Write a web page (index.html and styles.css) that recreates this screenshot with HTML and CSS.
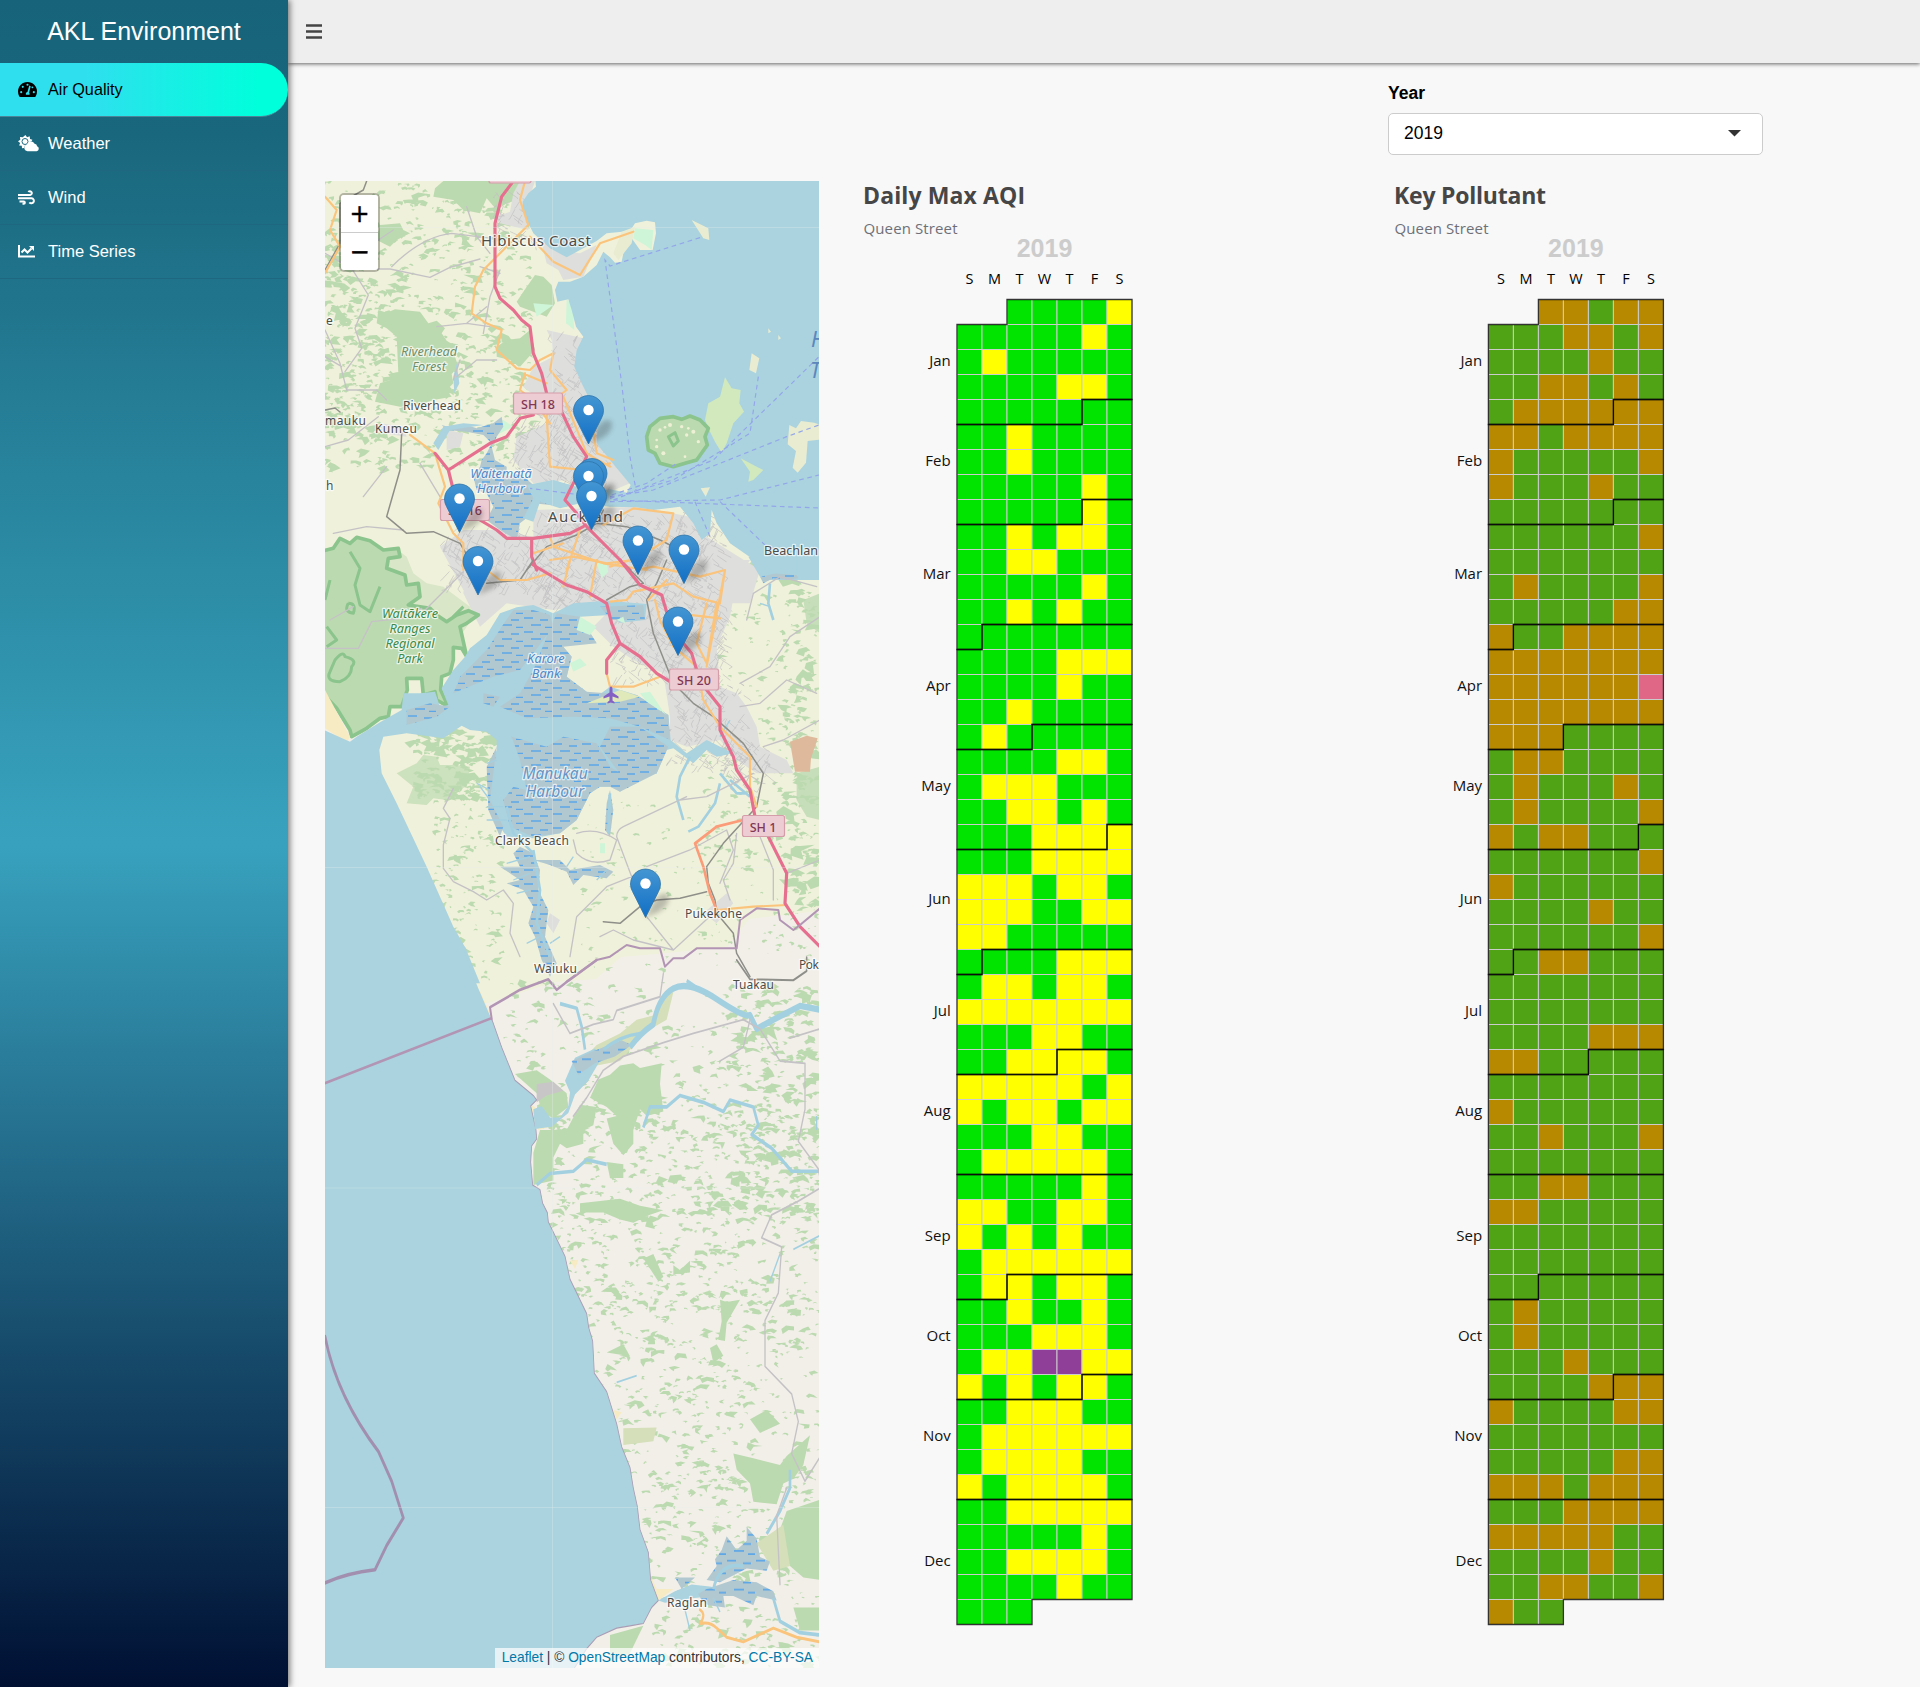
FILE: index.html
```html
<!DOCTYPE html>
<html lang="en">
<head>
<meta charset="utf-8">
<title>AKL Environment</title>
<link rel="stylesheet" href="styles.css">
</head>
<body>
<div class="app">
  <aside class="sidebar">
    <div class="brand">AKL Environment</div>
    <nav class="menu">
      <a class="item active"><svg class="ico" width="19" height="17" viewBox="0 0 576 512"><path fill="currentColor" d="M288 32C129 32 0 161 0 320c0 53 14 102 39 145 6 9 16 15 27 15h444c11 0 21-6 27-15 25-43 39-92 39-145C576 161 447 32 288 32z"/><g class="gauge"><circle cx="288" cy="112" r="32"/><circle cx="144" cy="176" r="32"/><circle cx="96" cy="336" r="32"/><circle cx="480" cy="336" r="32"/><circle cx="436" cy="190" r="28"/><path d="M340 138l46 16-50 190c18 20 22 46 10 72H242c-14-40 6-78 44-84z"/></g></svg><span>Air Quality</span></a>
      <a class="item"><svg class="ico" width="21" height="17" viewBox="0 0 21 17"><path fill="currentColor" d="M7.400 0l1.700 2.200 2.600-1 .3 2.800 2.400.8-1 1.800A4.600 4.600 0 0 0 9 9.300A4.300 4.300 0 0 0 6 13l-2 .3-.2-2.500-2.700-.4 1-2.500L0 6.200l2.300-1.500-.3-2.700 2.800.3z"/><circle class="sunring" cx="7" cy="6.500" r="3"/><path fill="currentColor" d="M9.500 16.200a3.400 3.400 0 0 1-.6-6.700 4.200 4.200 0 0 1 7.700-.7 2.600 2.600 0 0 1 2.500 2.400 2.600 2.600 0 0 1-.5 5z"/></svg><span>Weather</span></a>
      <a class="item"><svg class="ico" width="17" height="15" viewBox="0 0 17 15"><g fill="none" stroke="currentColor" stroke-width="2"><path d="M0 5h12.200a1.900 1.900 0 1 0-1.800-3"/><path d="M0 8.300h13.600a2.500 2.500 0 1 1-2.200 4"/><path d="M1.500 11.500h4.200a1.100 1.100 0 0 1 0 2.300H4.500"/></g></svg><span>Wind</span></a>
      <a class="item"><svg class="ico" width="17" height="13" viewBox="0 0 17 13"><path fill="none" stroke="currentColor" stroke-width="2" d="M1 0v11.500h16"/><path fill="none" stroke="currentColor" stroke-width="2" d="M3.500 7.500l3-3 3 3 4-4"/><path fill="currentColor" d="M11 1h5v5z"/></svg><span>Time Series</span></a>
    </nav>
  </aside>
  <div class="page">
    <header class="topbar"><svg width="16" height="15" viewBox="0 0 16 15"><path d="M0 1.500h16M0 7.500h16M0 13.500h16" stroke="#444" stroke-width="2.400"/></svg></header>
    <main class="content">
      <div class="filter">
        <label class="label">Year</label>
        <div class="select"><span>2019</span><svg width="13" height="7" viewBox="0 0 13 7"><path fill="#333" d="M0 0h13L6.500 6.500z"/></svg></div>
      </div>
      <div class="panels">
        <section class="map">
<svg class="canvas" width="494" height="1487" viewBox="0 0 494 1487">
<defs>
<linearGradient id="pin" x2="0" y2="1"><stop offset="0" stop-color="#4496d2"/><stop offset="1" stop-color="#126fc6"/></linearGradient>
<filter id="soft" x="-50%" y="-50%" width="200%" height="200%"><feGaussianBlur stdDeviation="2.400"/></filter>
<pattern id="tide3" width="87" height="42" patternUnits="userSpaceOnUse"><rect width="87" height="42" fill="#b2c8d0"/><path d="M3 6h27M51 12h24M24 27h30M66 34h21" stroke="#5ba6e8" stroke-width="3.800"/></pattern>
<g id="marker"><path class="shade" d="M0 0L8-16Q18-28 23-22Q25-12 12-5z"/><path class="pin" d="M0 0L-13-26A15 15 0 1 1 13-26z"/><circle cy="-34" r="5.200" fill="#fff"/></g>
</defs>
<rect width="494" height="1487" fill="#aad3df"/>
<g id="ground">
<path fill="#f2efe9" d="M0 0h494v1487H0z"/>
<path fill="#f0f1da" d="M0 0h494v730l-70 8-22 28-60 6-46 4-25 22-41 3-67 21-60 0-103-400H0z"/>
</g>
<g id="texture"></g>
<!-- northern suburbs and forests -->
<g transform="translate(-5 -11) scale(.33333)">
<path class="wood" d="M175 420L200 428 225 418 300 425 325 460 350 452 375 475 365 490 380 512 410 530 405 560 415 590 395 612 400 640 380 660 395 680 340 690 300 705 240 710 165 695 180 640 210 630 235 610 230 500 200 475 170 460z"/>
<path class="wood" d="M645 315L670 320 695 345 705 400 680 440 600 410 590 395 610 365zM560 510L600 505 630 480 645 540 600 590 570 570 530 560 530 530zM480 33L600 33 590 90 560 100 530 120 500 85 480 130 430 120 400 90 340 80 345 55 370 33zM180 165L240 160 250 180 270 190 230 210 210 230 170 210z"/>
<path class="mint" d="M640 400l60 5-50 35zM740 385l18 25 5 70-25-20zM500 770l50-20 30 20-60 30z"/>
<path class="urban" d="M600 33L645 33 620 110 625 180 540 160 530 140 570 125 580 70zM660 200L700 240 780 250 830 225 790 320 730 330 715 300 680 280zM680 480L790 505 770 600 830 710 840 800 930 940 870 965 790 960 740 930 640 940 580 870 590 800 680 760 660 690 610 650 640 590 700 560 695 510zM380 780L430 790 420 830 380 840zM180 760L250 770 260 800 190 790zM360 1130L430 1080 520 1080 640 1100 640 1020 960 1010 1110 1040 1160 1100 1320 1200 1290 1300 900 1300 430 1260z"/>
</g>
<!-- southern suburbs and ranges -->
<g transform="translate(-5 379) scale(.33333)">
<path class="urban" d="M440 0L1290 0 1250 60 1230 170 1190 260 1200 380 1250 400 1280 440 1310 500 1320 560 1400 600 1420 640 1310 640 1250 600 1200 540 1100 560 1050 540 1050 470 1030 340 940 300 880 260 820 200 900 120 700 150 560 130 480 200 430 100zM690 1060L720 1080 700 1120 680 1090zM1150 1060L1220 1000 1240 1030 1190 1090z"/>
<path class="wood" d="M190-10l30-30 40 30 20 50 40 30 50 10 80 60 10 30-40 60-60 20-60-60z" opacity=".45"/>
<path class="range" d="M-20-20L40-35 60-65 90-50 110-68 150-58 190-30 235-35 240-10 205-5 200 25 255 45 260 75 295 70 300 110 265 135 330 145 350 165 380 185 410 165 445 152 475 165 440 190 420 200 440 290 425 265 400 262 400 300 390 340 365 350 362 390 385 440 350 420 345 395 310 405 305 355 260 355 262 390 245 440 210 440 205 470 180 475 140 505 95 530 90 510 50 445 -20 370z"/>
<path class="range" d="M180 80l-30 75-30-20-15-60 15-50-30-50M85 130q25 0 15 30-30-5-15-30M20 200l30 40-30 20M45 300q25-30 30-10 40 10 20 30 0 30-35 45-45 0-30-30zM400 170l30-30M30 60l-15 60" fill="none"/>
<path class="sand" d="M15 390L90 530 80 548 15 505z"/>
<path class="wood" d="M290 610l20-25 40 5 10 25 45 0 45 5-10 60-30 10-30 30-40-5-20 20-60-5 20-50-50-40z" opacity=".7"/>
<path class="wood" d="M1450 120l50-20v120l-40-30zM1430 640l70-20v160l-40-10-30-50z" opacity=".8"/>
<path fill="#deb99b" d="M1410 545l50-18 33 8-20 60-3 40-45 0z"/>
</g>
<!-- Waikato hills -->
<g transform="translate(-5 779) scale(.33333 .45918)">
<path class="wood" d="M585 248L650 240 690 260 740 290 745 320 700 345 665 330 650 290zM810 300L835 260 870 250 900 230 940 225 960 235 1025 225 1020 270 1030 330 980 340 960 325 940 370 940 400 910 425 880 400 860 345 890 340 860 320zM740 370L780 315 830 320 820 360 790 370 790 400 740 410 720 400 700 430 700 480 640 490 640 420 660 370zM780 530L900 520 960 535 1030 545 990 555 940 572 900 565 850 550 780 550zM860 440l50 5 0 30-40 0zM1200 740l20 5 40-5-40 50-5 40-20-3 10-40zM860 855l50-18 20 26zM1240 1075L1300 1085 1380 1100 1400 1080 1470 1035 1450 1100 1420 1130 1390 1140 1370 1185 1300 1180 1290 1140 1250 1110zM1290 1000l50-20 40 30-60 20zM1400 1200L1500 1175 1500 1350 1450 1345 1410 1320 1370 1260zM870 1470l100-20-40 60-60 20zM1420 1410l80 0v50l-60 0zM970 650l30-10 30 50-15 10zM1170 845l20-8 20 25-30 15zM1060 665l20 10 30-20 0 25-50 5z"/>
<path fill="#d5dfb9" d="M910 1020l100-2-10 30-90 8zM790 215L830 185 900 160 950 130 1005 120 1030 75 1060 70 1040 130 980 155 900 220 830 230 790 255zM1310 1270l80-40 20 90-50 10z"/>
<path fill="#c8c6c6" d="M650 270l50-5 30 20-50 10-30 15z"/>
<path class="sand" d="M470 65l12 5 33 55-12 3zM630 315l15 5 15 35 25 10-30 5-20-30zM995 1345l15 25 50 0-45 25-15-20zM750 655l25-2-10 20zM880 980l25 5-15 15z"/>
</g>
<g id="streets" class="street"></g>
<!-- open water, inlets and tidal flats -->
<g transform="translate(-5 -11) scale(.33333)">
<path class="sea" d="M645 20L648 50 625 70 608 95 610 125 628 165 640 190 690 235 740 262 780 240 830 213 860 190 930 183 945 160 980 152 1005 157 1008 190 998 240 960 240 935 205 915 225 905 275 885 278 870 262 850 245 830 285 790 320 750 335 715 335 705 360 712 395 745 388 755 420 768 470 790 500 770 540 763 590 785 640 805 680 835 730 830 820 870 870 932 945 920 968 870 958 800 968 870 1010 950 1012 1000 1020 1080 1010 1120 1060 1145 1110 1170 1090 1175 1020 1190 1060 1230 1120 1310 1175 1340 1230 1510 1230 1510 20z"/>
<path class="tide3" d="M365 765L400 775 440 765 470 775 520 760 545 740 550 770 530 800 515 830 525 870 560 890 560 920 600 910 640 945 700 940 760 945 770 990 740 1010 690 1005 640 1000 625 1040 600 1060 590 1110 540 1080 500 1050 520 1010 500 970 470 960 460 920 480 890 485 870 500 850 515 820 490 795 440 785 380 780z"/>
<path class="sea" d="M620 945l80-15 70 20 60 20 80 10-40 30-90-10-60 15-60-20-20 60-30-10 30-60zM340 820l30-50 60-10 60 5-100 15-35 60zM410 580l8 60-15 30-3-50z"/>
<path fill="#e9ecd0" d="M1115 150L1165 175 1168 210 1150 205zM1295 550L1318 565 1308 610 1288 600zM1408 765l20 10 15-22 40 5 25 10v40l-45 5-5 65-25 30-15-15 10-50-25-20zM1142 955l28-3-13 28zM1345 475l8 10-8 5zM1375 495l8 10-8 5zM905 185l40-15-10 50-40 50-15-20z"/>
<path class="mint" d="M945 175l55 5-5 60-20-15-35-20z"/>
<path fill="#d2e9bd" d="M1215 622L1235 655 1262 660 1258 700 1272 725 1240 760 1220 820 1205 848 1185 815 1170 785 1155 750 1165 700 1200 680zM1262 865L1310 890 1330 900 1300 930 1285 935 1290 905z"/>
<path class="range" d="M980 800L990 770 1020 745 1060 740 1085 748 1110 738 1140 750 1165 775 1155 800 1162 825 1130 870 1100 878 1060 890 1020 880 1005 850 985 840z"/>
<path class="range" fill="none" d="M1045 800l20-12 10 25-15 15z"/>
<g class="speck"><circle cx="1020" cy="780" r="5"/><circle cx="1035" cy="772" r="4"/><circle cx="1050" cy="765" r="6"/><circle cx="1085" cy="770" r="5"/><circle cx="1105" cy="775" r="4"/><circle cx="1120" cy="785" r="6"/><circle cx="1135" cy="815" r="5"/><circle cx="1010" cy="810" r="4"/><circle cx="1010" cy="830" r="5"/><circle cx="1030" cy="850" r="6"/><circle cx="1095" cy="860" r="4"/><circle cx="1100" cy="795" r="5"/></g>
<g class="ferry"><path d="M1140 203L990 250 870 288 855 270 905 640 930 860 948 960M870 980L1000 960 1400 800 1497 765M870 985L1060 930 1290 790 1315 620M880 990L1180 870 1497 560M870 995L1200 990 1497 915M880 990L1497 1014M860 985L630 955M1200 995L1340 1130M1125 995L1170 1100M875 975L980 940 1070 880"/></g>
</g>
<g transform="translate(-5 379) scale(.33333)">
<path class="sea" d="M-10 500L90 545 110 530 180 487 245 450 250 400 300 400 345 395 360 440 385 435 365 385 400 330 435 290 450 265 500 225 540 160 590 142 640 135 700 160 760 130 860 122 980 132 975 180 900 188 870 165 780 170 830 250 720 250 755 290 740 350 800 395 830 410 870 380 950 405 1045 465 1052 540 1100 580 1160 540 1240 580 1190 590 1160 570 1120 610 1060 565 1040 570 1010 640 950 655 900 695 880 680 840 680 810 700 770 780 720 820 640 835 560 830 540 800 510 740 500 650 530 570 530 540 500 515 450 510 425 497 370 535 260 520 190 530 178 570 185 640 230 730 320 920 400 1100 440 1170 -10 1170z"/>
<path class="sea" d="M-10 1160L435 1160 480 1270-10 1270z"/>
<path class="tide3" d="M580 150L640 150 690 165 700 200 640 280 600 330 520 350 400 400 420 350 500 270 545 200zM710 160L780 170 830 250 730 260 755 290 740 350 800 395 860 400 950 405 1045 465 1050 540 960 500 870 475 760 470 620 475 540 440 600 400 640 330 680 230zM260 450l70-20 60 10-40 30-90 25zM840 140l130-5 5 45-100 0zM575 530L680 560 730 530 830 550 860 600 870 620 895 635 840 560 870 500 960 500 1045 560 1010 640 900 695 870 680 840 680 810 700 770 780 720 820 640 830 570 800 550 720 580 680 620 690 600 600zM500 620l30-60-20 160 40 80-10 30-35-80zM490 400l50 10-20 30-30-10z"/>
<path class="tide3" d="M1320 50l40-10 70 5 5 10-35 5-40-5-30 15zM600 860l40 20 20 50-5 60 30 60-10 80 35 80-20 40-25-50-20-70-20-40 15-50-30-50-50-20 40-10-60-40 60 0-20-40zM870 690l10 60-10 80-15-20 5-80zM640 900l80 0 30 30 90-15 40 20-20 20-70-10-30 30-20-40-50-20z"/>
<path class="sea" d="M1285-10L1430-10 1430 45 1370 40 1320 50z"/>
<path class="creek" d="M1350 70l-5 60 15 50M1200 670l-15 60-50 70-30 15M1110 590l-30 60-10 60 20 70M640 870l20 120-10 100 40 100M1230 660l60 50M1200 640l50 60 30 0M560 740l20 80 60 60M870 700l-5 120"/>
<path class="creek thin" d="M500 780h60M560 910l70-20M580 960l50-20M590 1000l40-10M500 740h50M620 1150l40-20M720 1130l-30 20M1320 130l30 10M760 890l-20 30M830 960l30-30M1230 480l-30 50M530 600l-30 10M510 690l-40-20M480 680l30 40"/>
<path class="mint" d="M780 170l50 30-20 25-40-15zM750 310l30-15 20 20-40 20zM960 400l30-5 40 60 10 10-60-40zM830 10l30-5 5 30-20 20zM890 180l20-10 5 20zM840 850l15 0 0 30-15 0z"/>
<path fill="#e0e9b9" d="M800 430l100-40 60 20-60 15z"/>
</g>
<g transform="translate(-5 779) scale(.33333 .45918)">
<path class="sea" d="M-10-40L425-40 435-10 475 62 515 130 -10 130z"/>
<path class="sea coast" d="M515 128L545 190 585 262 640 295 650 305 632 318 648 370 650 390 635 405 632 440 638 490 660 500 668 530 682 550 685 570 735 645 750 695 800 770 806 800 818 830 823 900 860 940 890 1010 905 1060 930 1105 940 1150 952 1190 960 1240 985 1290 992 1350 1015 1395 995 1410 970 1445 930 1450 890 1455 830 1475 800 1500 730 1580-30 1580-30 128"/>
<path class="sea" d="M640 325l25-7 25 25 30 0 25-25 5-30-15-25 30-50 60-20 20 20-40 50-40 30-20 40-50 30-50 5zM1015 1395l50-20 50-15 60 5 10 20-70 5-80 10z"/>
<path class="tidesq" d="M755 220l60-20 90-25 30 10-50 25-60 15-50 25zM1185 1305l20-20 15-30 30 30 30-20 0-30 30 25 10 40 30 10-10 20-60-5-80 30-40-5 30-30zM1160 1370l80-20 70 5 50 20 10 20-60-10-10 20-60-20-30 0 5 25-50-5-20-10-10-15zM1065 1345l60 0-40 25z"/>
<path class="creek wide" d="M930 190Q960 160 1000 140 1015 80 1060 62T1190 85 1290 120L1310 150 1360 130 1440 100 1500 108"/>
<path class="creek" d="M850 195Q900 165 960 160M1100 45l60 30M970 365l20-45 50 0 40-25 70 15 60 20 20-25 70 15 15 40-20 20 60 30 60 50 90 0M650 490l40-25 70-5 40-25 60 10M720 95l50 10 15 40 10 50M1340 1250l40-50 30-50 0-40M1360 1390l20 50 60 25 60 5M1180 1370q20-60 90-50"/>
<path class="creek thin" d="M1420 630l80-30M1380 640l-30 60M890 920l60-15M1090 1400l20 60M1180 1390l20 30M1490 340v30"/>
</g>
<!-- transport -->
<g transform="translate(-5 -11) scale(.33333)" class="lines">
<path class="minor" d="M15 480L60 580 80 660 170 660 200 690M15 250l80 45 50 80-40 100 20 60-50 70M90 297l120 0 120 25 60-30 90-25M215 290q90-90 180-100l120 15M480 290l60 20M350 470l90-10 60-50M440 460l70 10M160 220l60-40M15 830l70-20 90-70M420 570l-20 60M540 300l-30 80-20 110M410 620l60-50 60 0M300 880l60 100M130 980l70-90M40 1090l100-20 110 10M440 110l30 90 40 50M15 560l50 30"/>
<path class="rail" d="M245 790L240 900 200 1040 260 1090 340 1085 420 1120 450 1170M620 1200L680 1130 770 1095 830 1060 850 1020M830 1060L920 1070 1020 1110 1080 1140M15 300L60 220 60 100 130 60 140 33M15 720l30-6 15 12"/>
<path class="main" d="M615 33L600 90 625 165 570 220 490 300 465 350 455 430 500 460 545 480 530 540 590 595 630 600 660 570 700 550 690 600 740 660 700 690 680 740 690 890 790 900 870 880M615 610L600 660 640 690 690 760M730 680L800 850 870 890M270 795L345 850 375 950 355 1000 400 1090 430 1120 430 1200M630 200L700 275 780 315 840 220 940 185M15 80L50 120 30 180 60 230 15 310M850 1065L940 1015 1060 1030 1040 1110 960 1160 870 1190M690 1100L700 1130 850 1180 980 1200M740 1200L780 1080M620 615L680 640M640 1150L730 1120M810 720L830 850 880 870"/>
<path class="moto" d="M575 40L545 80 525 160 525 350 540 385 580 420 605 450 630 470 640 550 665 610 680 670M725 725L760 800 800 860 770 920 735 990 770 1030 800 1070 870 1140 930 1200M640 735L600 745 560 800 510 820 385 900 345 850M385 900L400 960M480 1050L530 1080 560 1105 640 1105 750 1090 790 1070M635 1105L635 1160 650 1200"/>
</g>
<g transform="translate(-5 379) scale(.33333)" class="lines">
<path class="minor" d="M15 265l100 0 40-80 90-10 60-30M310 155l120-120M1080 720l80-10 140-70M1260 440l60-10 80-70 90 40M1330 560l60-20 110-60M1500 170l-90 60-60 90-90 50M890 830q0-20 20-30l190-90M890 830l90 240 80 100 120-110M980 920l130-50 110-60 20 60-40 100M770 820q60-20 120 20l-20 60q-60 20-100-20l-10-40M600 1190l-30-70 10-90-30-40-50 30-40-25-60-30-30-40 0-70 20-80-20-30 30-60M750 1190l20-120 90-90 100-40M840 1130l40-20 60 30 120 30M1400 940l100-40M1320 830l40 100 0 90M1250 820l-10 90-30 50 20 60M1280 180l20-80 80-50 110 30M30 180l70-40"/>
<path class="rail" d="M1040 0L1010 70 980 120 1000 220 1060 370 1120 430 1180 470 1270 550 1330 640 1310 740 1210 850 1160 920 1165 970 1185 1020 1190 1060 1240 1120 1250 1180 1290 1250M850 1085L900 1090 960 1040 1010 1020 1080 1015 1160 995M860 120L930 80 970 70 900 0M500 70L600 60 640 0"/>
<path class="main" d="M870 125L920 120 940 95 1060 70 1120 110 1200 130 1215 30 1140 50 1000 20 950 30M1160 130L1130 250 1160 310 1190 130M1215 30L1160 320M1005 120L1020 180 1060 260 1130 320 1150 420 1200 500 1290 590 1290 680 1310 740M985 120L1040 60M860 340L870 380 940 380 1020 350M500 30L540 60 620 60 690 40M730 80L750 0M810 110L830 0M690 0L760-10 860 10 940 0M1070 160L1200 175M1190 1050L1300 1040 1400 1035"/>
<path class="main red" d="M1290 775L1190 800 1125 850 1150 920 1170 1000 1190 1050"/>
<path class="moto" d="M640 15L740 75 800 95 860 130 875 190 900 250 960 290 1010 340 1050 365M900 250L860 300 860 340M900 0L960 75 1025 105 1050 190 1090 250 1115 280 1130 330M1160 390L1200 440 1200 510 1240 590 1250 630 1290 690 1305 770M1345 830L1400 940 1395 1030 1440 1100 1500 1160"/>
<path class="bound" d="M740 1265L830 1200 870 1190 920 1155 960 1165 1020 1165 1035 1220 1060 1195 1090 1195 1130 1165 1250 1165 1260 1080 1310 1045 1375 1050 1380 1080 1420 1110 1440 1095 1500 1045"/>
</g>
<g transform="translate(-5 779) scale(.33333 .45918)" class="lines">
<path class="minor" d="M700 95l50 65 70-20 60-10 10-20 130-30 10-50M760 340l40-40 50-60 60-30 120-30 90-20 150-30 50 20 60 70 75 5 0 100-20 70 60 60 10 40-70 30-80 30-30 50 60 20-10 100-40 60 0 100 80 60 20 60-20 70 40 60 60-70 30-70M1400 1150l-30 60 10 150M1410 170l90-20M1200 220l70-30 20-60"/>
<path class="rail" d="M1250 0l40 42 130 2 40-20 0-30"/>
<path class="bound" d="M515 128L510 103 600 65 685 42 710 65 745 45 830 0M15 268L510 128"/>
<path class="bound sea-line" d="M15 820Q50 950 175 1070L215 1135 250 1215 200 1275 165 1328Q80 1335 10 1358"/>
<path class="main" d="M1140 1415q20 10 0 30 30-5 50 10l30 20 50 10 90-30 70 20 70 10"/>
</g>
<g stroke="#e9eff0" stroke-opacity=".3"><path d="M227.500 0v1487M0 46.500h494M0 686.500h494M0 1007h494M0 1326.500h494"/></g>
<!-- place names -->
<g class="place">
<text x="156" y="65" class="city" textLength="110">Hibiscus Coast</text><text x="223" y="341" class="city" textLength="75">Auckland</text>
<text x="78" y="229" textLength="58">Riverhead</text><text x="50" y="252" textLength="42">Kumeu</text><text x="0" y="244" textLength="41">mauku</text><text x="1" y="144">e</text><text x="1" y="309">h</text>
<text x="439" y="374" textLength="54" lengthAdjust="spacingAndGlyphs">Beachlan</text><text x="170" y="664" textLength="74">Clarks Beach</text><text x="360" y="737" textLength="57">Pukekohe</text><text x="209" y="792" textLength="43">Waiuku</text><text x="408" y="808" textLength="41">Tuakau</text><text x="474" y="788" textLength="20">Pok</text><text x="342" y="1426" textLength="40">Raglan</text>
</g>
<g class="area green"><text x="104" y="175" class="pale">Riverhead</text><text x="104" y="190" class="pale">Forest</text><text x="85" y="437">Waitākere</text><text x="85" y="452">Ranges</text><text x="85" y="467">Regional</text><text x="85" y="482">Park</text></g>
<g class="area blue"><text x="176" y="297">Waitematā</text><text x="176" y="312">Harbour</text><text x="221" y="482">Karore</text><text x="221" y="497">Bank</text><text x="230" y="598" class="large">Manukau</text><text x="230" y="616" class="large">Harbour</text></g>
<g class="gulf"><text x="486" y="166">H</text><text x="485" y="197">T</text></g>
<g class="shield"><rect x="164" y="-19" width="42" height="21" rx="2"/><rect x="188.500" y="212" width="49" height="21" rx="2"/><text x="213" y="228">SH 18</text><rect x="115.500" y="318.500" width="49" height="21" rx="2"/><text x="140" y="334">SH 16</text><rect x="344.500" y="488" width="49" height="21" rx="2"/><text x="369" y="504">SH 20</text><rect x="417.500" y="634.500" width="42" height="21" rx="2"/><text x="438" y="650.500">SH 1</text></g>
<path fill="#8461c4" d="M286 505.500q1.500 0 1.500 3v3l6 4v2l-6-2v4l2 1.500v1.500l-3.500-1-3.500 1v-1.500l2-1.500v-4l-6 2v-2l6-4v-3q0-3 1.500-3z"/>
<g id="markers"></g>
</svg>
          <div class="zoom"><span>+</span><span>−</span></div>
          <div class="credit"><a>Leaflet</a> | © <a>OpenStreetMap</a> contributors, <a>CC-BY-SA</a></div>
        </section>
        <section class="chart"><svg id="aqi" width="504" height="1487"><text class="title" x="13" y="23" textLength="162">Daily Max AQI</text><text class="sub" x="13.500" y="53" textLength="94">Queen Street</text></svg></section>
        <section class="chart"><svg id="pollutant" width="504" height="1487"><text class="title" x="13" y="23" textLength="152">Key Pollutant</text><text class="sub" x="13.500" y="53" textLength="94">Queen Street</text></svg></section>
      </div>
    </main>
  </div>
</div>
<script src="script.js"></script>
</body>
</html>
```
FILE: styles.css
```css
* { box-sizing: border-box; }
body { margin: 0; font-family: "Liberation Sans", Arial, sans-serif; background: #f8f8f8; }
.app { display: flex; height: 1687px; overflow: hidden; }
.sidebar { width: 288px; flex: none; color: #fff; background: linear-gradient(#17647a 0%, #19677d 8%, #38a2be 50%, #001033 100%); box-shadow: 2px 0 6px rgba(0,0,0,.5); z-index: 2; }
.brand { height: 63px; line-height: 63px; font-size: 25px; text-align: center; }
.menu { display: flex; flex-direction: column; }
.item { display: grid; grid-template-columns: 30px 1fr; align-items: center; height: 54px; padding-left: 18px; font-size: 16.500px; border-bottom: 1px solid #1f6680; }
.ico { overflow: visible; }
.item.active { font-size: 16.200px; color: #000; background: linear-gradient(90deg, #2fdfee 0%, #2fdfee 30%, #00ffdb 90%); border-radius: 0 27px 27px 0; border-color: #4b8499; }
.gauge { fill: #2cdfee; }
.sunring { fill: none; stroke: #1c6c83; stroke-width: 1; }
.page { flex: 1; display: flex; flex-direction: column; }
.topbar { height: 63px; flex: none; background: #eee; display: flex; align-items: center; padding-left: 18px; box-shadow: 0 1px 4px rgba(0,0,0,.6); }
.content { padding: 0 0 0 37px; }
.filter { margin-left: 1063px; width: 375px; height: 118px; padding-top: 20px; }
.label { display: block; font-weight: bold; font-size: 17.500px; line-height: 21px; margin-bottom: 9px; }
.select { height: 42px; border: 1px solid #ccc; border-radius: 5px; background: #fff; display: flex; align-items: center; justify-content: space-between; padding: 0 21px 2px 15px; font-size: 17.500px; }
.select svg { margin-top: 1px; }
.panels { display: flex; }
.map { width: 494px; height: 1487px; position: relative; overflow: hidden; margin-right: 31px; flex: none; }
.canvas { display: block; }
.chart { flex: none; width: 504px; margin-right: 27px; height: 1487px; }
.chart svg { display: block; }
.zoom { position: absolute; left: 14px; top: 12px; width: 41px; border: 2px solid rgba(0,0,0,.25); background-clip: padding-box; border-radius: 5px; overflow: hidden; }
.zoom span { display: block; height: 37px; background: #fff; font: 24px/38px "DejaVu Sans", sans-serif; -webkit-text-stroke: .4px #000; text-align: center; }
.zoom span:first-child { border-bottom: 1px solid #ccc; height: 38px; }
.credit { position: absolute; right: 0; bottom: 0; height: 20px; padding: 0 6px 0 7px; line-height: 19px; font-size: 13.750px; color: #333; background: rgba(255,255,255,.7); white-space: nowrap; }
.credit a { color: #0078a8; }

.wood { fill: #bcdab0; }
.mint { fill: #cef5d8; }
.urban { fill: #dededc; }
.sand { fill: #f7ebc3; }
.range { fill: #bcdab0; stroke: #8bc48c; stroke-width: 11; stroke-linejoin: round; }
path.range[fill="none"] { fill: none; stroke-width: 9; }
.speck { fill: #eef0d5; }
.sea { fill: #aad3df; stroke: none; }
.sea.coast { stroke: #a99db5; stroke-width: 2.500; }
.tide3, .tidesq { fill: url(#tide3); }
.creek { fill: none; stroke: #a3d0e0; stroke-width: 8; stroke-linejoin: round; }
.creek.wide { stroke-width: 14; }
.creek.thin { stroke-width: 4; }
.ferry { fill: none; stroke: #93a6ea; stroke-width: 3.500; stroke-dasharray: 14 11; }
.lines { fill: none; stroke-linejoin: round; stroke-linecap: round; }
.minor { stroke: #c5c2c6; stroke-width: 4; }
.rail { stroke: #8f8f8a; stroke-width: 4.500; }
.main { stroke: #fbc47c; stroke-width: 6.500; }
.main.red { stroke: #fb9b78; stroke-width: 8; }
.moto { stroke: #e66f8f; stroke-width: 9.500; }
.bound { stroke: #b295b4; stroke-width: 6; }
.sea-line { stroke: #a28fb0; stroke-width: 8; }
.street { fill: none; stroke: #c3c1c3; stroke-width: .7; }
.place, .area, .gulf, .shield { font-family: "Noto Sans", sans-serif; }
.place text, .area text { paint-order: stroke; stroke: rgba(255,255,255,.7); stroke-width: 2.500px; stroke-linejoin: round; }
.place { font-size: 12px; fill: #4c4c49; }
.place .city { font-size: 15px; }
.area { font-size: 12.700px; font-style: italic; text-anchor: middle; }
.green { fill: #3c8a47; }
.green .pale { fill: #6e8f6a; }
.blue { fill: #5087c6; }
.area .large { font-size: 15.500px; fill: #6694c3; }
.gulf { font-size: 21px; font-style: italic; fill: #5b87bd; }
.shield rect { fill: #edcdd3; stroke: #d59ca9; stroke-width: 1.200; }
.shield text { font-size: 12.500px; font-weight: 500; fill: #813753; text-anchor: middle; }
.pin { fill: url(#pin); stroke: #2d73a8; stroke-width: .8; }
.shade { fill: #333; opacity: .28; filter: url(#soft); }

.title { font: bold 23px "Open Sans", sans-serif; fill: #464646; }
.sub { font: 15px "Open Sans", sans-serif; fill: #6e7079; }
.year { font: bold 25px "Liberation Sans", sans-serif; fill: #ccc; text-anchor: middle; }
.day { font: 14.500px "Open Sans", sans-serif; text-anchor: middle; }
.month { font: 15px "Open Sans", sans-serif; fill: #111; text-anchor: end; }
.cell { stroke: #ccc; stroke-width: 1; }
.divider { fill: none; stroke: #000; stroke-opacity: .75; stroke-width: 1.300; }
```
FILE: script.js
```js
const NS = "http://www.w3.org/2000/svg";
function add(parent, name, attrs, text) {
  const node = document.createElementNS(NS, name);
  for (const key in attrs) node.setAttribute(key, attrs[key]);
  if (text) node.textContent = text;
  parent.appendChild(node);
  return node;
}

/* One string per week, Sunday first. */
const aqi = `--GGGGY GGGGGYG GYGGGGG GGGGYYG GGGGGGG GGYGGGG GGYGGGG GGGGGYG GGGGGYG GGYGYYG GGYYGGG GGGGGYG GGYGYGG
GGGGGGG GGGGYYY GGGGYGG GGYGGGG GYGGGGG GGGGYYG GYYYGGG GGYYGYG GGGYYYY GGGYYYY YYYGYYG YYYGGYY YYGGGGG
GGGGYYY GYYGYYG YYYYYYY GGGYYGG GGYYYYG YYYYYGY YGYYGYY GGGYYGG GYYYYYG GGGGGYG YYGGYYG YGYGYGG GYYYYYY
GYYGYYG GGYGGYG GGGYYYG GYYPPYY YGYGYYG GGYYYGG GYYYYYY GYYYYGG YGYYYYG GGYYYYY GGGGGYG GGYYYYG GGGGYGG GGG`.split(/\s+/);
const pollutant = `--BBGBB GGGBBGB GGGGBGG GGBBGBG GBBBBBB BBGBBBB BGGGGGB BGGGBGG GGGGGGG GGGGGGB GGGGGGG GBGGGGB GGGGGBB
BGGBBBB BBBBBBB BBBBBBP BBBBBBB BBBGGGG GBBGGGG GBGGGBG GBGGGGB BGBBGGG GGGGGGB BGGGGGG GGGGBGG GGGGGGB
GGBBGGG GGGGGGG GGGGGGG GGGGBBB BBGGGGG GGGGGGG BGGGGGG GGBGGGB GGGGGGG GGBBGGG BBGGGGG GGGGGGG GGGGGGG
GGGGGGG GBGGGGG GBGGGGG GGGBGGG GGGGBBB BGGGGBB GGGGGGG GGGGGBB BBBGBBB GGGBBBB BBBBBGG GGGGBGG GGBBGGB BGG`.split(/\s+/);

const months = [["Jan", 31, 185.3], ["Feb", 28, 285.3], ["Mar", 31, 398.3], ["Apr", 30, 510.3], ["May", 31, 610.3], ["Jun", 30, 723],
  ["Jul", 31, 835], ["Aug", 31, 935.3], ["Sep", 30, 1060], ["Oct", 31, 1160], ["Nov", 30, 1260], ["Dec", 31, 1385]];

function calendar(id, weeks, colours, left) {
  const svg = document.getElementById(id), top = 118.5, size = 25;
  add(svg, "text", { class: "year", x: left + 87.5, y: 75.7 }, "2019");
  [..."SMTWTFS"].forEach((d, i) => add(svg, "text", { class: "day", x: left + 12.5 + i * size, y: 103 }, d));
  weeks.forEach((week, row) => [...week].forEach((code, col) => {
    if (code !== "-") add(svg, "rect", { class: "cell", x: left + col * size, y: top + row * size, width: size, height: size, fill: colours[code] });
  }));
  let start = 2;
  for (const [name, days, y] of months) {
    const end = start + days;
    const r0 = Math.floor(start / 7), c0 = start % 7, r1 = Math.floor(end / 7), c1 = end % 7;
    const X = c => left + c * size, Y = r => top + r * size;
    let d = `M${X(0)} ${Y(c0 ? r0 + 1 : r0)}H${X(c0)}V${Y(r0)}H${X(7)}V${Y(r1)}`;
    d += c1 ? `H${X(c1)}V${Y(r1 + 1)}H${X(0)}Z` : `H${X(0)}Z`;
    add(svg, "path", { class: "divider", d });
    add(svg, "text", { class: "month", x: left - 6.3, y }, name);
    start = end;
  }
}
calendar("aqi", aqi, { G: "#00e400", Y: "#ffff00", P: "#8f3f97" }, 107);
calendar("pollutant", pollutant, { G: "#4fa315", B: "#b78900", P: "#e16787" }, 107.4);

/* Repeatable scatter for small patches of bush and side streets. */
let seed = 7;
const rnd = () => (seed = (seed * 16807) % 2147483647) / 2147483647;
const texture = document.getElementById("texture");
[[0, 0, 210, 290, 750, 3], [0, 60, 60, 200, 160, 3.5], [90, 550, 85, 70, 160, 4], [110, 620, 70, 180, 140, 2.5],
 [380, 380, 114, 300, 220, 2.5], [250, 620, 244, 170, 190, 1.8], [460, 400, 34, 330, 100, 5], [180, 800, 314, 160, 300, 3],
 [220, 930, 274, 200, 600, 3], [260, 1110, 234, 200, 380, 2.8], [320, 1290, 174, 197, 300, 3], [410, 800, 84, 240, 190, 4]].forEach(([x, y, w, h, n, s]) => {
  let d = "";
  for (let i = 0; i < n; i++) {
    const px = x + rnd() * w, py = y + rnd() * h, k = s * (0.4 + rnd() * rnd() * 1.8), t = rnd() * 3;
    d += `M${px.toFixed(1)} ${py.toFixed(1)}`;
    for (let j = 1; j < 6; j++) {
      const a = t + j * 1.05, r = k * (0.5 + rnd());
      d += `L${(px + Math.cos(a) * r * 1.4).toFixed(1)} ${(py + Math.sin(a) * r * 0.8).toFixed(1)}`;
    }
    d += "z";
  }
  add(texture, "path", { class: "wood", d });
});
let lanes = "";
[[225, 150, 40, 170, 120], [185, 230, 100, 80, 130], [120, 345, 130, 60, 160], [215, 330, 180, 95, 420], [290, 420, 110, 80, 230], [345, 500, 75, 85, 130], [395, 560, 50, 40, 60], [170, 10, 35, 50, 35]].forEach(([x, y, w, h, n]) => {
  for (let i = 0; i < n; i++) {
    const px = x + rnd() * w, py = y + rnd() * h, a = (rnd() < 0.5 ? 0.4 : 1.9) + rnd() * 0.5, l = 4 + rnd() * 10;
    lanes += `M${px.toFixed(1)} ${py.toFixed(1)}l${(Math.cos(a) * l).toFixed(1)} ${(Math.sin(a) * l).toFixed(1)}l${(rnd() * 8 - 4).toFixed(1)} ${(rnd() * 6 - 2).toFixed(1)}`;
  }
});
add(document.getElementById("streets"), "path", { d: lanes });

const markers = document.getElementById("markers");
[[263.5, 263], [267, 326], [263.5, 329], [266.5, 349], [134.5, 351.5], [153, 414], [313, 393.5], [359, 402.5], [353, 474.5], [320.5, 736.5]].forEach(([x, y]) =>
  add(markers, "use", { href: "#marker", x, y }));
```
